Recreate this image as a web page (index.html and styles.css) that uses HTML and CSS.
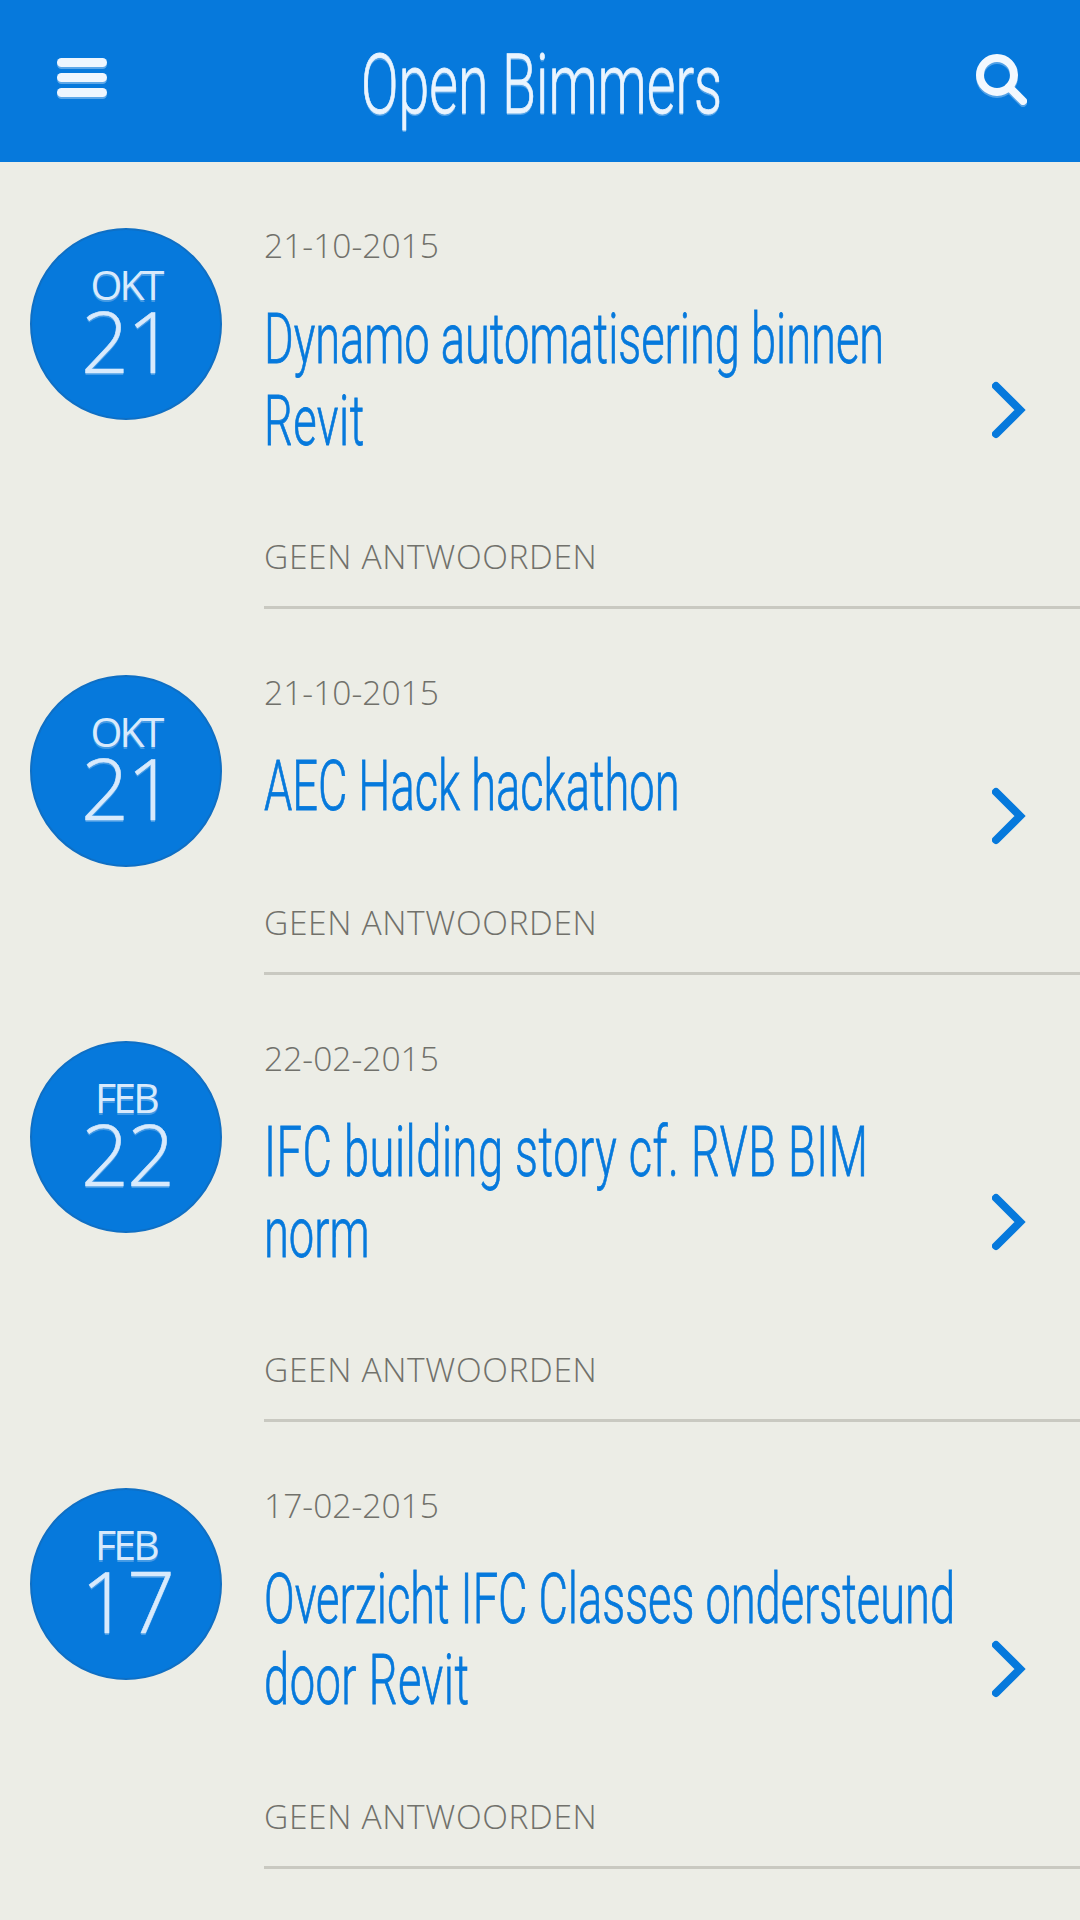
FILE: index.html
```html
<!DOCTYPE html>
<html lang="nl">
<head>
<meta charset="utf-8">
<title>Open Bimmers</title>
<link rel="stylesheet" href="styles.css">
</head>
<body>
<header class="topbar">
  <svg class="icon-menu" width="50" height="42" viewBox="0 0 50 42"><rect x="0" y="0" width="50" height="9" rx="4.5"/><rect x="0" y="15" width="50" height="9" rx="4.5"/><rect x="0" y="30" width="50" height="9" rx="4.5"/></svg>
  <h1 class="brand"><span class="narrow">Open Bimmers</span></h1>
  <svg class="icon-search" width="52" height="54" viewBox="0 0 52 54"><circle cx="21" cy="21" r="17" /><path d="M33 33 L47 47"/></svg>
</header>
<main class="posts">
  <article class="post">
    <div class="badge"><span class="month">OKT</span><span class="day">21</span></div>
    <div class="body">
      <div class="text">
        <div class="date">21-10-2015</div>
        <h2 class="title"><span class="narrow">Dynamo automatisering binnen<br><span class="wide">Revit</span></span></h2>
        <div class="replies">GEEN ANTWOORDEN</div>
      </div>
      <svg class="chevron" width="36" height="60" viewBox="0 0 36 60"><path d="M4 6 L28 30 L4 54"/></svg>
    </div>
  </article>
  <article class="post">
    <div class="badge"><span class="month">OKT</span><span class="day">21</span></div>
    <div class="body">
      <div class="text">
        <div class="date">21-10-2015</div>
        <h2 class="title"><span class="narrow">AEC Hack hackathon</span></h2>
        <div class="replies">GEEN ANTWOORDEN</div>
      </div>
      <svg class="chevron" width="36" height="60" viewBox="0 0 36 60"><path d="M4 6 L28 30 L4 54"/></svg>
    </div>
  </article>
  <article class="post">
    <div class="badge"><span class="month">FEB</span><span class="day">22</span></div>
    <div class="body">
      <div class="text">
        <div class="date">22-02-2015</div>
        <h2 class="title"><span class="narrow"><span class="wide">IFC building story cf. RVB BIM</span><br>norm</span></h2>
        <div class="replies">GEEN ANTWOORDEN</div>
      </div>
      <svg class="chevron" width="36" height="60" viewBox="0 0 36 60"><path d="M4 6 L28 30 L4 54"/></svg>
    </div>
  </article>
  <article class="post">
    <div class="badge"><span class="month">FEB</span><span class="day">17</span></div>
    <div class="body">
      <div class="text">
        <div class="date">17-02-2015</div>
        <h2 class="title"><span class="narrow">Overzicht IFC Classes ondersteund<br><span class="wide">door Revit</span></span></h2>
        <div class="replies">GEEN ANTWOORDEN</div>
      </div>
      <svg class="chevron" width="36" height="60" viewBox="0 0 36 60"><path d="M4 6 L28 30 L4 54"/></svg>
    </div>
  </article>
</main>
</body>
</html>
```
FILE: styles.css
```css
* { box-sizing: border-box; }
html, body { margin: 0; padding: 0; }
body {
  width: 1080px;
  height: 1920px;
  overflow: hidden;
  background: #ecede6;
  font-family: "Open Sans", sans-serif;
}
.topbar {
  height: 162px;
  background: #0679dc;
  display: flex;
  align-items: flex-start;
  padding: 58px 52px 0 57px;
}
.icon-menu { fill: #eef6fe; filter: drop-shadow(0 2px 0 rgba(255,255,255,.35)); flex: none; }
.icon-search { fill: none; stroke: #f2f8fe; stroke-width: 8; stroke-linecap: round; margin-top: -4px; filter: drop-shadow(0 2px 0 rgba(255,255,255,.3)); flex: none; }
.narrow {
  display: block;
  width: 150%;
  font-family: "Roboto", sans-serif;
  font-weight: 300;
  -webkit-text-stroke: .8px currentColor;
  transform: scaleX(.646);
  transform-origin: left center;
  white-space: nowrap;
}
.wide { letter-spacing: .8px; }
.brand {
  flex: 1;
  min-width: 0;
  margin: -21px 0 0 254px;
  height: 96px;
  color: #eaf4fe;
  font-size: 84px;
  line-height: 96px;
  font-weight: 300;
  text-shadow: 0 2px 0 rgba(255,255,255,.3);
}
.brand .narrow { transform: scaleX(.66); width: 100%; }
.posts { display: flex; flex-direction: column; }
.post { display: flex; align-items: flex-start; padding-left: 30px; }
.badge {
  flex: none;
  width: 192px;
  height: 192px;
  margin: 66px 42px 0 0;
  border-radius: 50%;
  background: #0679dc;
  border: 2px solid #0f6fc4;
  color: #d8eafc;
  display: flex;
  flex-direction: column;
  align-items: center;
  padding-top: 34px;
  text-shadow: 0 2px 0 rgba(255,255,255,.25);
}
.month { font-size: 41px; line-height: 40px; letter-spacing: -2.8px; }
.day { font-size: 84px; line-height: 70px; font-weight: 300; letter-spacing: -2px; margin: 2px 0 0 2px; -webkit-text-stroke: .6px currentColor; }
.body {
  flex: 1;
  min-width: 0;
  display: flex;
  align-items: center;
  padding: 51px 52px 0 0;
  border-bottom: 3px solid #c9c9c1;
}
.text { flex: 1; min-width: 0; padding-bottom: 30px; }
.date, .replies { color: #71716b; font-size: 33.6px; line-height: 40px; font-weight: 300; }
.replies { letter-spacing: .63px; }
.date { margin-top: 12px; }
.title { margin: 34px 0 74px; color: #0679dc; font-size: 70px; line-height: 81.5px; font-weight: 300; }
.chevron { fill: none; stroke: #0679dc; stroke-width: 8; stroke-linecap: round; flex: none; }
```
